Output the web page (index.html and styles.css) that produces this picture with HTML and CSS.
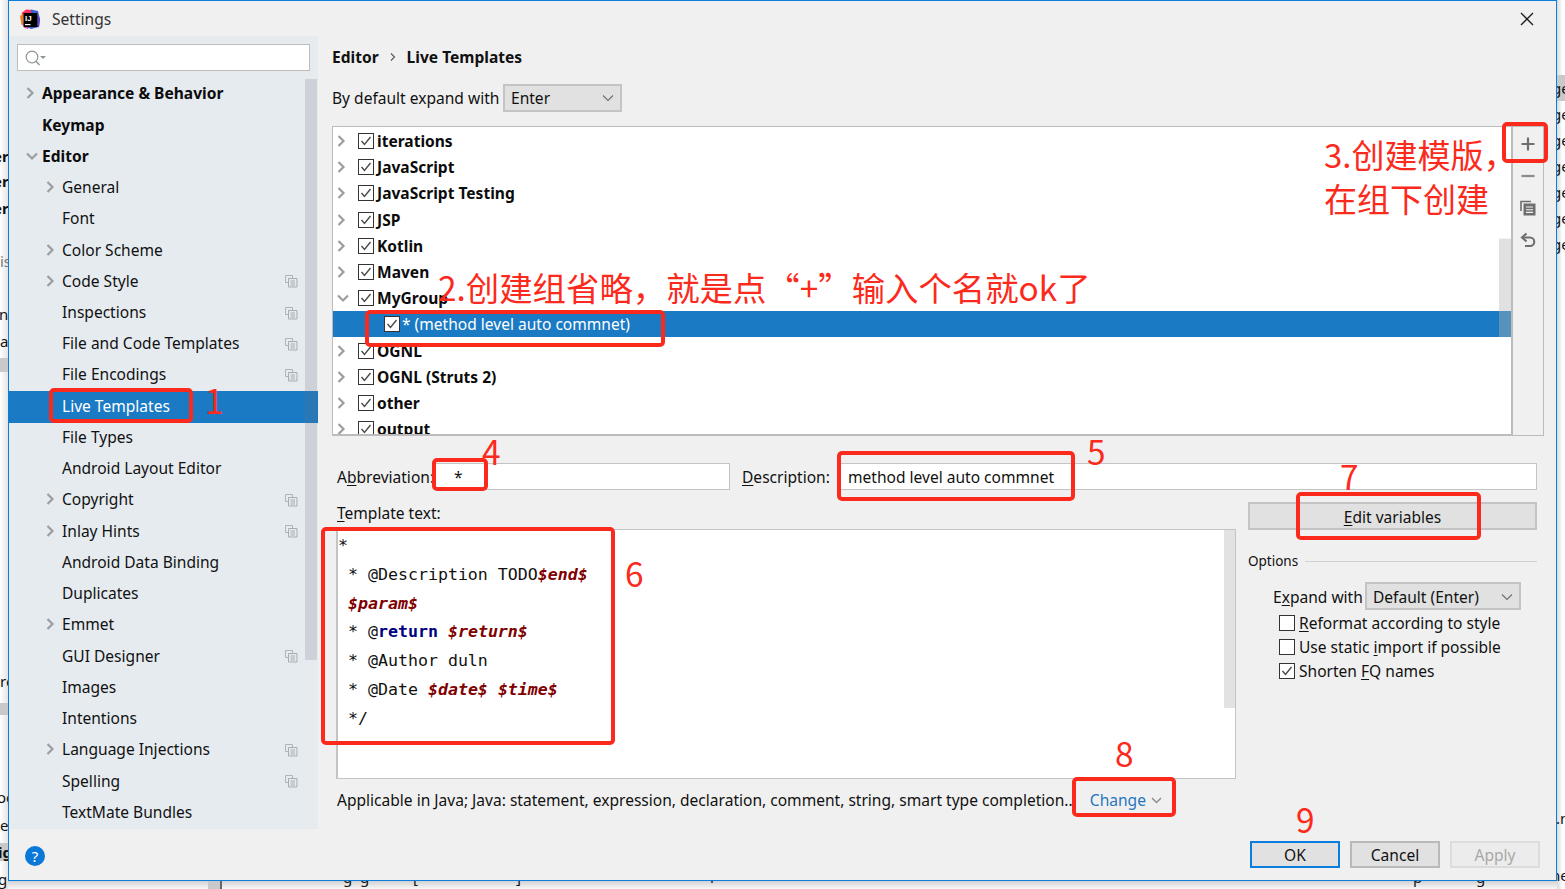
FILE: index.html
```html
<!DOCTYPE html>
<html lang="zh">
<head>
<meta charset="utf-8">
<title>Settings</title>
<link rel="stylesheet" href="styles.css">
</head>
<body>
<svg class="sprite" width="0" height="0">
  <symbol id="chev-r" viewBox="0 0 10 14"><path d="M2.5 2 L7.5 7 L2.5 12" fill="none" stroke="#9b9ea1" stroke-width="2.2"/></symbol>
  <symbol id="chev-d" viewBox="0 0 14 10"><path d="M2 2.5 L7 7.5 L12 2.5" fill="none" stroke="#9b9ea1" stroke-width="2.2"/></symbol>
  <symbol id="check" viewBox="0 0 16 16"><rect x="0.5" y="0.5" width="15" height="15" fill="#fff" stroke="#333"/><path d="M3.5 8 L6.5 11.5 L12.5 4" fill="none" stroke="#4a4a4a" stroke-width="1.4"/></symbol>
  <symbol id="uncheck" viewBox="0 0 16 16"><rect x="0.5" y="0.5" width="15" height="15" fill="#fff" stroke="#333"/></symbol>
  <symbol id="proj" viewBox="0 0 14 14"><path d="M1.5 1.5h7v7h-7z" fill="none" stroke="#aeb4b9"/><path d="M4.5 4.5h8.5v8.5h-8.5z" fill="#e6eaee" stroke="#a6adb2"/><path d="M6.5 7h4.5M6.5 9h4.5M6.5 11h4.5" stroke="#a6adb2"/></symbol>
</svg>

<div class="bg-left">
  <span class="frag frag-b l1">er</span><span class="frag frag-b l2">er</span><span class="frag frag-b l3">er</span>
  <span class="frag l4">is</span><span class="frag l5">n</span><span class="frag l6">a</span>
  <span class="graybox l7"></span><span class="frag l8">re</span><span class="graybox l9"></span>
  <span class="frag l10">oc</span><span class="frag l11">e</span><span class="frag frag-b l12">ig</span><span class="frag l13">gu</span>
</div>
<div class="bg-right">
  <span class="graybox r0"></span>
  <span class="frag r1">ge</span><span class="frag r2">ge</span><span class="frag r3">ge</span><span class="frag r4">ge</span><span class="frag r5">ge</span><span class="frag r6">ge</span><span class="frag r7">ge</span>
  <span class="frag r8">.n</span><span class="frag r9">ne</span>
</div>
<div class="bg-bottom">
  <span class="graybox d0"></span>
  <span class="frag d1">g</span><span class="frag d2">g</span><span class="frag d3">[</span><span class="frag d4">]</span><span class="frag d5">r</span><span class="frag d6">p</span><span class="frag d7">g</span>
</div>

<div class="window">
  <header class="titlebar">
    <svg class="logo" width="20" height="20" viewBox="0 0 20 20">
      <path d="M1.5 4 L6 0.5 L13 1 L13 5 L3.5 5 L3.5 9 Z" fill="#fe315d"/>
      <path d="M0 7 L3.5 4.5 L3.5 15 L1.5 16 Z" fill="#f97a12"/>
      <path d="M2 15 L3.5 14 L3.5 18 L9 18 L8 20 L4 18.5 Z" fill="#ee3a8c"/>
      <path d="M11 0.5 L18 2 L20 10 L19 18 L11 20 L7 18 L17.5 18 L17.5 4 L11 4 Z" fill="#3b5fd9"/>
      <path d="M17.5 6 L20 10 L19 18 L14 18 L17.5 16 Z" fill="#6b3fd1"/>
      <rect x="3.5" y="4" width="14" height="14" fill="#000"/>
      <rect x="5" y="15" width="5.5" height="1.2" fill="#fff"/>
      <text x="5" y="12" class="logo-text">IJ</text>
    </svg>
    <span class="title">Settings</span>
    <svg class="close" width="14" height="14" viewBox="0 0 14 14"><path d="M1 1 L13 13 M13 1 L1 13" stroke="#1a1a1a" stroke-width="1.3"/></svg>
  </header>

  <div class="content">
    <aside class="sidebar">
      <div class="search">
        <svg width="22" height="18" viewBox="0 0 22 18"><circle cx="8" cy="8" r="5.8" fill="none" stroke="#8f9498" stroke-width="1.2"/><path d="M12 12.3 L15.5 16" stroke="#8f9498" stroke-width="1.4"/><path d="M16 7 h6 l-3 3z" fill="#8f9498"/></svg>
      </div>
      <div class="navwrap">
        <div class="scrollbar"></div>
        <ul class="nav">
          <li class="nav-item bold"><svg class="arrow" width="10" height="14"><use href="#chev-r"/></svg>Appearance &amp; Behavior</li>
          <li class="nav-item bold"><span class="noarrow"></span>Keymap</li>
          <li class="nav-item bold"><svg class="arrow-d" width="14" height="10"><use href="#chev-d"/></svg>Editor</li>
          <li class="nav-item sub"><svg class="arrow" width="10" height="14"><use href="#chev-r"/></svg>General</li>
          <li class="nav-item sub"><span class="noarrow"></span>Font</li>
          <li class="nav-item sub"><svg class="arrow" width="10" height="14"><use href="#chev-r"/></svg>Color Scheme</li>
          <li class="nav-item sub"><svg class="arrow" width="10" height="14"><use href="#chev-r"/></svg>Code Style<svg class="proj" width="14" height="14"><use href="#proj"/></svg></li>
          <li class="nav-item sub"><span class="noarrow"></span>Inspections<svg class="proj" width="14" height="14"><use href="#proj"/></svg></li>
          <li class="nav-item sub"><span class="noarrow"></span>File and Code Templates<svg class="proj" width="14" height="14"><use href="#proj"/></svg></li>
          <li class="nav-item sub"><span class="noarrow"></span>File Encodings<svg class="proj" width="14" height="14"><use href="#proj"/></svg></li>
          <li class="nav-item sub selected"><span class="noarrow"></span>Live Templates</li>
          <li class="nav-item sub"><span class="noarrow"></span>File Types</li>
          <li class="nav-item sub"><span class="noarrow"></span>Android Layout Editor</li>
          <li class="nav-item sub"><svg class="arrow" width="10" height="14"><use href="#chev-r"/></svg>Copyright<svg class="proj" width="14" height="14"><use href="#proj"/></svg></li>
          <li class="nav-item sub"><svg class="arrow" width="10" height="14"><use href="#chev-r"/></svg>Inlay Hints<svg class="proj" width="14" height="14"><use href="#proj"/></svg></li>
          <li class="nav-item sub"><span class="noarrow"></span>Android Data Binding</li>
          <li class="nav-item sub"><span class="noarrow"></span>Duplicates</li>
          <li class="nav-item sub"><svg class="arrow" width="10" height="14"><use href="#chev-r"/></svg>Emmet</li>
          <li class="nav-item sub"><span class="noarrow"></span>GUI Designer<svg class="proj" width="14" height="14"><use href="#proj"/></svg></li>
          <li class="nav-item sub"><span class="noarrow"></span>Images</li>
          <li class="nav-item sub"><span class="noarrow"></span>Intentions</li>
          <li class="nav-item sub"><svg class="arrow" width="10" height="14"><use href="#chev-r"/></svg>Language Injections<svg class="proj" width="14" height="14"><use href="#proj"/></svg></li>
          <li class="nav-item sub"><span class="noarrow"></span>Spelling<svg class="proj" width="14" height="14"><use href="#proj"/></svg></li>
          <li class="nav-item sub"><span class="noarrow"></span>TextMate Bundles</li>
        </ul>
      </div>
    </aside>

    <main class="main">
      <div class="crumbs"><b>Editor</b><svg width="8" height="10" viewBox="0 0 8 10"><path d="M2 1.5 L5.5 5 L2 8.5" fill="none" stroke="#555" stroke-width="1.1"/></svg><b>Live Templates</b></div>
      <div class="expand-row">
        <span class="expand-label">By default expand with</span>
        <div class="select sel-enter">Enter<svg width="12" height="8" viewBox="0 0 12 8"><path d="M1 1.5 L6 6.5 L11 1.5" fill="none" stroke="#6e6e6e" stroke-width="1.1"/></svg></div>
      </div>

      <div class="listpane">
        <div class="list">
          <div class="list-scroll"></div>
          <div class="row"><svg class="arrow" width="10" height="14"><use href="#chev-r"/></svg><svg class="cb" width="16" height="16"><use href="#check"/></svg>iterations</div>
          <div class="row"><svg class="arrow" width="10" height="14"><use href="#chev-r"/></svg><svg class="cb" width="16" height="16"><use href="#check"/></svg>JavaScript</div>
          <div class="row"><svg class="arrow" width="10" height="14"><use href="#chev-r"/></svg><svg class="cb" width="16" height="16"><use href="#check"/></svg>JavaScript Testing</div>
          <div class="row"><svg class="arrow" width="10" height="14"><use href="#chev-r"/></svg><svg class="cb" width="16" height="16"><use href="#check"/></svg>JSP</div>
          <div class="row"><svg class="arrow" width="10" height="14"><use href="#chev-r"/></svg><svg class="cb" width="16" height="16"><use href="#check"/></svg>Kotlin</div>
          <div class="row"><svg class="arrow" width="10" height="14"><use href="#chev-r"/></svg><svg class="cb" width="16" height="16"><use href="#check"/></svg>Maven</div>
          <div class="row"><svg class="arrow-d" width="14" height="10"><use href="#chev-d"/></svg><svg class="cb" width="16" height="16"><use href="#check"/></svg>MyGroup</div>
          <div class="row child"><svg class="cb" width="16" height="16"><use href="#check"/></svg>* (method level auto commnet)</div>
          <div class="row"><svg class="arrow" width="10" height="14"><use href="#chev-r"/></svg><svg class="cb" width="16" height="16"><use href="#check"/></svg>OGNL</div>
          <div class="row"><svg class="arrow" width="10" height="14"><use href="#chev-r"/></svg><svg class="cb" width="16" height="16"><use href="#check"/></svg>OGNL (Struts 2)</div>
          <div class="row"><svg class="arrow" width="10" height="14"><use href="#chev-r"/></svg><svg class="cb" width="16" height="16"><use href="#check"/></svg>other</div>
          <div class="row"><svg class="arrow" width="10" height="14"><use href="#chev-r"/></svg><svg class="cb" width="16" height="16"><use href="#check"/></svg>output</div>
        </div>
        <div class="toolbar">
          <svg width="16" height="16" viewBox="0 0 16 16"><path d="M8 1.5 V14.5 M1.5 8 H14.5" stroke="#6e6e6e" stroke-width="2.2"/></svg>
          <svg width="16" height="16" viewBox="0 0 16 16"><path d="M1.5 8 H14.5" stroke="#8a8a8a" stroke-width="2.2"/></svg>
          <svg width="16" height="16" viewBox="0 0 16 16"><path d="M1 11 V1.5 H11" fill="none" stroke="#6e6e6e" stroke-width="1.6"/><rect x="3.5" y="3.5" width="12" height="12" fill="#6e6e6e"/><path d="M6 7h7M6 9.7h7M6 12.4h7" stroke="#f2f2f2" stroke-width="1.1"/></svg>
          <svg width="16" height="16" viewBox="0 0 16 16"><path d="M3.5 5.5 H10 a4 4 0 0 1 0 8.5 H5" fill="none" stroke="#6e6e6e" stroke-width="2.1"/><path d="M6.5 1.5 L2 5.5 L6.5 9.5" fill="none" stroke="#6e6e6e" stroke-width="2.1"/></svg>
        </div>
      </div>

      <div class="abbr-row">
        <label class="lab-abbr">A<u>b</u>breviation:</label>
        <div class="input in-abbr">*</div>
        <label class="lab-desc"><u>D</u>escription:</label>
        <div class="input in-desc">method level auto commnet</div>
      </div>

      <div class="lower">
        <div class="template">
          <div class="lab-tpl"><u>T</u>emplate text:</div>
          <div class="editor">
            <div class="ed-scroll"></div>
            <pre class="code">*
 * @Description TODO<i>$end$</i>
 <i>$param$</i>
 * @<b>return</b> <i>$return$</i>
 * @Author duln
 * @Date <i>$date$</i> <i>$time$</i>
 */</pre>
          </div>
          <div class="applicable"><span>Applicable in Java; Java: statement, expression, declaration, comment, string, smart type completion...</span><a class="change">Change<svg width="11" height="7" viewBox="0 0 11 7"><path d="M1 1 L5.5 5.5 L10 1" fill="none" stroke="#8a9097" stroke-width="1.5"/></svg></a></div>
        </div>
        <div class="side">
          <div class="btn edit-vars"><span><u>E</u>dit variables</span></div>
          <div class="options-head"><span>Options</span><i class="rule"></i></div>
          <div class="expand2"><span class="expand2-label">E<u>x</u>pand with</span><div class="select sel-default">Default (Enter)<svg width="12" height="8" viewBox="0 0 12 8"><path d="M1 1.5 L6 6.5 L11 1.5" fill="none" stroke="#6e6e6e" stroke-width="1.1"/></svg></div></div>
          <div class="opts">
            <div class="opt"><svg width="16" height="16"><use href="#uncheck"/></svg><span><u>R</u>eformat according to style</span></div>
            <div class="opt"><svg width="16" height="16"><use href="#uncheck"/></svg><span>Use static <u>i</u>mport if possible</span></div>
            <div class="opt"><svg width="16" height="16"><use href="#check"/></svg><span>Shorten <u>F</u>Q names</span></div>
          </div>
        </div>
      </div>
    </main>
  </div>

  <footer class="footer">
    <div class="help">?</div>
    <div class="btn ok">OK</div>
    <div class="btn cancel">Cancel</div>
    <div class="btn apply">Apply</div>
  </footer>
</div>

<div class="box b1"></div><div class="box b2"></div><div class="box b3"></div><div class="box b4"></div>
<div class="box b5"></div><div class="box b6"></div><div class="box b7"></div><div class="box b8"></div>
<div class="note n1">1</div>
<div class="note n2">2.创建组省略，就是点“+”输入个名就ok了</div>
<div class="note n3">3.创建模版，<br>在组下创建</div>
<div class="note n4">4</div>
<div class="note n5">5</div>
<div class="note n6">6</div>
<div class="note n7">7</div>
<div class="note n8">8</div>
<div class="note n9">9</div>
</body>
</html>
```
FILE: styles.css
```css
* { box-sizing: border-box; }
html, body { margin: 0; padding: 0; }
body {
  width: 1565px; height: 889px; overflow: hidden; position: relative;
  background: #fff;
  font-family: "Noto Sans", "Noto Sans CJK SC", sans-serif;
  font-size: 15.55px; color: #111;
}
.sprite { position: absolute; }
ul { list-style: none; margin: 0; padding: 0; }
u { text-underline-offset: 2px; }

/* what is visible behind the dialog */
.bg-left, .bg-right, .bg-bottom { position: absolute; overflow: hidden; }
.bg-left { left: 0; top: 0; width: 8px; height: 889px; background: linear-gradient(90deg, #fff, #e4e4e4); }
.bg-right { left: 1557px; top: 0; width: 8px; height: 889px; background: linear-gradient(90deg, #dadada, #fff 70%); }
.bg-bottom { left: 8px; top: 881px; width: 1549px; height: 8px; background: linear-gradient(#d2d2d2, #f8f8f8); }
.frag { position: absolute; font-size: 15px; line-height: 18px; color: #111; white-space: nowrap; }
.frag-b { font-weight: 700; }
.graybox { position: absolute; background: #c9c9c9; }
.l1 { left: -7px; top: 147px; } .l2 { left: -7px; top: 172px; } .l3 { left: -7px; top: 199px; }
.l4 { left: 0; top: 252px; color: #777; } .l5 { left: -1px; top: 305px; } .l6 { left: 0; top: 332px; }
.l7 { left: 0; top: 358px; width: 8px; height: 14px; } .l8 { left: 0; top: 672px; }
.l9 { left: 0; top: 703px; width: 8px; height: 12px; }
.l10 { left: -3px; top: 788px; } .l11 { left: 0; top: 816px; } .l12 { left: -2px; top: 843px; background: #c9c9c9; } .l13 { left: -2px; top: 870px; }
.r0 { left: 0; top: 75px; width: 8px; height: 26px; }
.r1 { left: -5px; top: 79px; } .r2 { left: -5px; top: 105px; } .r3 { left: -5px; top: 131px; } .r4 { left: -5px; top: 157px; }
.r5 { left: -5px; top: 183px; } .r6 { left: -5px; top: 209px; } .r7 { left: -5px; top: 235px; }
.r8 { left: -1px; top: 809px; } .r9 { left: -6px; top: 866px; }
.d0 { left: 200px; top: 0; width: 14px; height: 8px; border-right: 2px solid #666; }
.d1 { left: 335px; top: -13px; } .d2 { left: 352px; top: -13px; } .d3 { left: 405px; top: -13px; } .d4 { left: 508px; top: -13px; }
.d5 { left: 702px; top: -13px; } .d6 { left: 1405px; top: -13px; } .d7 { left: 1468px; top: -13px; }

/* dialog */
.window {
  position: absolute; left: 8px; top: 0; width: 1549px; height: 881px;
  background: #f0f0f0; border: 1px solid #0a7ddf;
  display: flex; flex-direction: column;
}
.titlebar { height: 35px; flex: none; display: flex; align-items: center; padding: 0 22px 0 11px; }
.logo { flex: none; }
.logo-text { font: 700 8px "Liberation Sans", sans-serif; fill: #fff; }
.title { margin-left: 12px; color: #333; }
.close { margin-left: auto; }
.content { flex: 1; min-height: 0; display: flex; }

.sidebar { width: 309px; flex: none; background: #e6ebf0; height: 793px; display: flex; flex-direction: column; }
.search { margin: 8px 8px 0; height: 27px; flex: none; background: #fff; border: 1px solid #bdbdbd; padding: 4px 0 0 6px; display: flex; }
.navwrap { position: relative; flex: 1; padding-top: 8px; min-height: 0; }
.scrollbar { position: absolute; z-index: 1; right: 1px; top: 8px; width: 12px; height: 581px; background: rgba(105,110,120,.2); }
.nav-item { height: 31.24px; display: flex; align-items: center; position: relative; white-space: nowrap; padding-bottom: 2.5px; }
.nav-item.bold { font-weight: 700; color: #0c0c0c; padding-left: 16px; }
.nav-item.sub { padding-left: 36px; }
.nav-item.selected { background: #1a7ac4; color: #fff; }
.arrow { flex: none; margin-right: 7px; }
.arrow-d { flex: none; margin: 0 3px 0 0; }
.noarrow { width: 17px; flex: none; }
.proj { position: absolute; left: 275px; top: 8px; }

.main { flex: 1; min-width: 0; padding-left: 14px; position: relative; }
.crumbs { height: 16px; margin-top: 13px; display: flex; align-items: center; gap: 10px; }
.crumbs b { font-weight: 700; }
.expand-row { display: flex; align-items: center; margin-top: 19px; height: 28px; gap: 6px; }
.expand-label { width: 165px; flex: none; white-space: nowrap; }
.select { background: #e1e1e1; border: 2px solid #c4c4c4; height: 28px; display: flex; align-items: center; justify-content: space-between; padding: 0 6px 0 6px; color: #111; }
.sel-enter { width: 119px; }
.sel-default { width: 156px; padding-top: 2px; }

.listpane { margin-top: 14px; display: flex; height: 310px; width: 1212px; }
.list { position: relative; width: 1182px; background: #fff; border: 1px solid #bcbcbc; border-width: 1px 2px 2px 1px; overflow: hidden; padding-top: 0.5px; }
.list-scroll { position: absolute; right: 0; top: 111px; width: 12px; height: 99px; background: rgba(180,180,180,.4); z-index: 2; border-top: 1px solid #f4f4f4; }
.row { height: 26.2px; display: flex; align-items: center; font-weight: 700; color: #0c0c0c; padding-left: 3px; padding-top: 1px; white-space: nowrap; }
.row .arrow { margin-right: 12px; }
.row .arrow-d { margin: 0 8px 0 0; }
.cb { margin-right: 3px; flex: none; }
.row.child { background: #1a7ac4; color: #fff; font-weight: 400; padding-left: 51px; }
.row.child .cb { margin-right: 2px; }
.toolbar { width: 31px; border: 1px solid #bcbcbc; border-left: 0; display: flex; flex-direction: column; align-items: center; gap: 16px; padding-top: 9px; }

.abbr-row { position: relative; margin-top: 27px; height: 27px; display: flex; align-items: center; padding-left: 5px; width: 1205px; }
.lab-abbr { width: 97px; flex: none; white-space: nowrap; }
.input { background: #fff; border: 1px solid #c4c4c4; height: 27px; display: flex; align-items: center; padding-left: 19px; }
.in-abbr { width: 296px; }
.lab-desc { margin-left: 12px; width: 95px; flex: none; white-space: nowrap; }
.in-desc { flex: 1; padding-left: 10px; }

.lower { display: flex; margin-top: 12px; width: 1205px; padding-left: 5px; }
.template { width: 899px; flex: none; }
.lab-tpl { height: 20px; line-height: 22px; margin-bottom: 7px; }
.editor { position: relative; height: 250px; margin-left: -1px; background: #fff; border: 1px solid #c4c4c4; border-left-width: 2px; padding-top: 2px; }
.ed-scroll { position: absolute; right: 0; top: 0; width: 11px; height: 178px; background: #e2e2e2; }
.code { margin: 0; font: 16.6px/28.8px "DejaVu Sans Mono", monospace; color: #111; }
.code i { color: #7f0000; font-weight: 700; font-style: italic; }
.code b { color: #00007f; }
.applicable { margin-top: 11px; display: flex; align-items: center; white-space: nowrap; height: 20px; }
.change { color: #2675bf; margin-left: 13px; display: inline-flex; align-items: center; gap: 5px; }

.side { margin-left: 12px; width: 289px; flex: none; }
.btn { background: #e1e1e1; border: 2px solid #c4c4c4; display: flex; align-items: center; justify-content: center; }
.edit-vars { width: 289px; height: 28px; padding-top: 2px; }
.options-head { display: flex; align-items: center; gap: 7px; margin-top: 21px; height: 20px; font-size: 13.5px; }
.rule { flex: 1; height: 1px; background: #d0d0d0; }
.expand2 { display: flex; align-items: center; gap: 5px; margin-top: 11px; padding-left: 25px; }
.expand2-label { width: 87px; flex: none; white-space: nowrap; padding-top: 2px; }
.opts { margin-top: 1px; }
.opt { display: flex; align-items: center; gap: 4px; height: 24px; padding-left: 31px; }

.footer { position: relative; flex: none; height: 51px; display: flex; align-items: center; padding: 0 16px 0 16px; gap: 10px; }
.help { width: 20px; height: 20px; border-radius: 50%; background: #0a78d7; color: #fff; font-size: 15px; display: flex; align-items: center; justify-content: center; margin-right: auto; margin-top: 3px; }
.ok, .cancel, .apply { width: 90px; height: 27px; }
.ok { border-color: #0a7ddf; }
.cancel { border-color: #b9b9b9; }
.apply { background: #ececec; border-color: #dcdcdc; color: #a8a8a8; }

/* red annotations drawn on top of the screenshot */
.box { position: absolute; border: 4px solid #fb2a1c; border-radius: 5px; }
.b1 { left: 49px; top: 388px; width: 144px; height: 35px; }
.b2 { left: 365px; top: 310px; width: 300px; height: 37px; }
.b3 { left: 1502px; top: 122px; width: 46px; height: 41px; }
.b4 { left: 432px; top: 458px; width: 56px; height: 33px; }
.b5 { left: 837px; top: 451px; width: 238px; height: 50px; }
.b6 { left: 321px; top: 527px; width: 294px; height: 218px; }
.b7 { left: 1296px; top: 492px; width: 185px; height: 48px; }
.b8 { left: 1072px; top: 777px; width: 104px; height: 40px; }
.note { position: absolute; color: #fb2a1c; font-family: "Noto Sans CJK SC", sans-serif; font-size: 33.4px; line-height: 44px; white-space: nowrap; }
.n1 { left: 205px; top: 378px; }
.n2 { left: 438px; top: 265px; }
.n3 { left: 1324px; top: 132px; font-size: 33px; }
.n4 { left: 482px; top: 429px; }
.n5 { left: 1087px; top: 429px; }
.n6 { left: 625px; top: 551px; }
.n7 { left: 1340px; top: 454px; }
.n8 { left: 1115px; top: 731px; }
.n9 { left: 1296px; top: 797px; }
```
